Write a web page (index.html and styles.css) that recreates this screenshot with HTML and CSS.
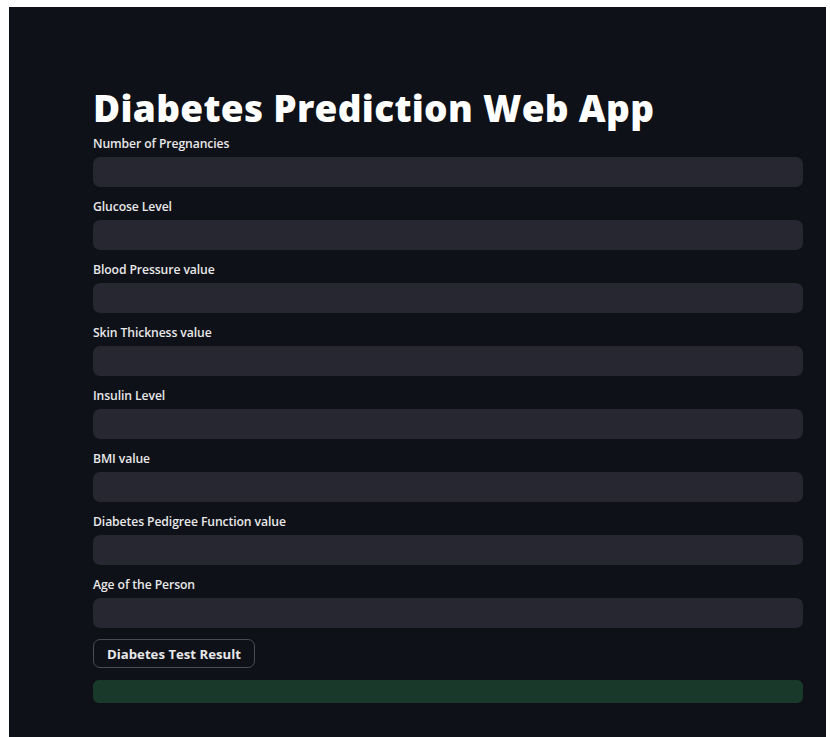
FILE: index.html
```html
<!DOCTYPE html>
<html lang="en">
<head>
<meta charset="utf-8">
<title>Diabetes Prediction Web App</title>
<link rel="stylesheet" href="styles.css">
</head>
<body>
<div class="app">
  <main class="block">
    <h1 class="title">Diabetes Prediction Web App</h1>
    <div class="field"><label class="label">Number of Pregnancies</label><input class="input" type="text"></div>
    <div class="field"><label class="label">Glucose Level</label><input class="input" type="text"></div>
    <div class="field"><label class="label">Blood Pressure value</label><input class="input" type="text"></div>
    <div class="field"><label class="label">Skin Thickness value</label><input class="input" type="text"></div>
    <div class="field"><label class="label">Insulin Level</label><input class="input" type="text"></div>
    <div class="field"><label class="label">BMI value</label><input class="input" type="text"></div>
    <div class="field"><label class="label">Diabetes Pedigree Function value</label><input class="input" type="text"></div>
    <div class="field last"><label class="label">Age of the Person</label><input class="input" type="text"></div>
    <button class="btn" type="button">Diabetes Test Result</button>
    <div class="success"></div>
  </main>
</div>
</body>
</html>
```

FILE: styles.css
```css
html, body {
  margin: 0;
  padding: 0;
  background: #ffffff;
}

.app {
  margin: 7px 4px 0 9px;
  min-height: 730px;
  background: #0e1117;
  font-family: "Open Sans", "Noto Sans", sans-serif;
  color: #fafafa;
}

.block {
  width: 710px;
  margin-left: 84px;
  padding-top: 77px;
  display: flex;
  flex-direction: column;
}

.title {
  margin: 0 0 6px;
  font-size: 37px;
  font-weight: 800;
  line-height: 47px;
  color: #ffffff;
  letter-spacing: 0.3px;
}

.field {
  display: flex;
  flex-direction: column;
  margin-bottom: 13px;
}

.field.last {
  margin-bottom: 11px;
}

.label {
  font-size: 12.2px;
  font-weight: 600;
  line-height: 14px;
  color: #e8e8ea;
  margin-bottom: 6px;
  letter-spacing: -0.1px;
}

.input {
  height: 30px;
  border: none;
  border-radius: 7px;
  background: #262730;
  padding: 0 10px;
  box-sizing: border-box;
  outline: none;
}

.btn {
  align-self: flex-start;
  height: 29px;
  padding: 0 13px;
  border: 1px solid #4a4c55;
  border-radius: 7px;
  background: #0e1117;
  color: #e8e8ea;
  font-family: "Open Sans", "Noto Sans", sans-serif;
  font-size: 13.2px;
  font-weight: 700;
}

.success {
  margin-top: 12px;
  height: 23px;
  border-radius: 6px;
  background: #193a2a;
}
```
